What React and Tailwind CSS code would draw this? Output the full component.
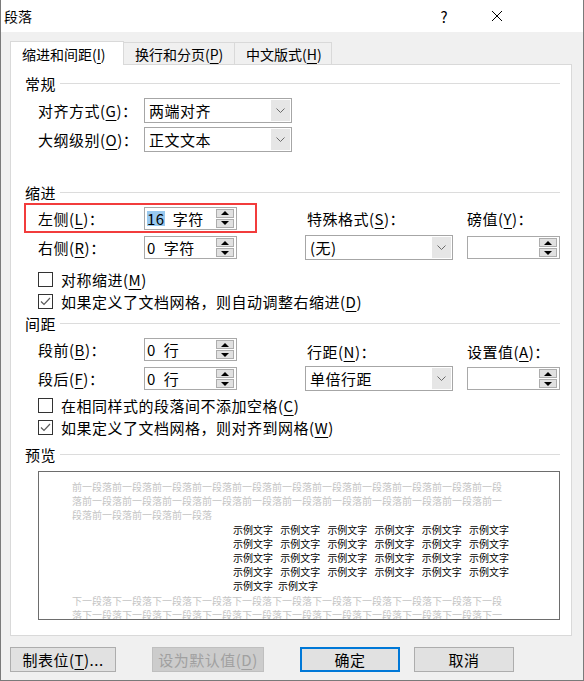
import React from 'react';

const U = ({ children }) => <span className="underline underline-offset-[3px] decoration-1">{children}</span>;

function Heading({ children, className = '' }) {
  return (
    <div className={`flex items-center h-[20px] pl-[14px] pr-[11px] ${className}`}>
      <span>{children}</span>
      <div className="flex-1 h-px bg-[#dcdcdc] ml-[4px]" />
    </div>
  );
}

function Chevron() {
  return (
    <svg width="9" height="5" viewBox="0 0 9 5">
      <polyline points="0.5,0.5 4.5,4.5 8.5,0.5" fill="none" stroke="#6b6b6b" strokeWidth="1" />
    </svg>
  );
}

function Select({ value }) {
  return (
    <div className="w-[148px] h-[25px] border border-[#a6a6a6] bg-white flex items-stretch">
      <span className="flex-1 flex items-center pl-[4px]">{value}</span>
      <span className="w-[19px] m-px bg-[#e6e6e6] flex items-center justify-center">
        <Chevron />
      </span>
    </div>
  );
}

function Tri({ down }) {
  return (
    <svg width="8" height="4" viewBox="0 0 8 4">
      {down ? <polygon points="0,0 8,0 4,4" fill="#000" /> : <polygon points="4,0 8,4 0,4" fill="#000" />}
    </svg>
  );
}

function Spin({ num, unit, selected }) {
  return (
    <div className="w-[93px] h-[23px] border border-[#a9a9a9] bg-white flex items-center">
      <span className="flex-1 pl-[2px] whitespace-nowrap flex items-center">
        {num && <span className={selected ? 'bg-[#99c9ef]' : ''}>{num}</span>}
        {unit && <span className="ml-[8px]">{unit}</span>}
      </span>
      <div className="flex flex-col gap-px mr-[2px]">
        <span className="w-[18px] h-[9px] bg-[#e1e1e1] border border-[#adadad] flex items-center justify-center"><Tri /></span>
        <span className="w-[18px] h-[9px] bg-[#e1e1e1] border border-[#adadad] flex items-center justify-center"><Tri down /></span>
      </div>
    </div>
  );
}

function Check({ checked, children, className = '' }) {
  return (
    <div className={`flex items-center h-[20px] pl-[27px] ${className}`}>
      <span className="w-[15px] h-[15px] border border-[#333] bg-white mr-[8px] flex items-center justify-center">
        {checked && (
          <svg width="11" height="9" viewBox="0 0 11 9">
            <polyline points="1,4.5 4,7.5 10,1" fill="none" stroke="#5a5a5a" strokeWidth="1.2" />
          </svg>
        )}
      </span>
      <span>{children}</span>
    </div>
  );
}

function Btn({ children, className = '', disabled }) {
  return (
    <div
      className={`h-[25px] flex items-center justify-center ${
        disabled ? 'bg-[#cccccc] border border-[#bfbfbf] text-[#a0a0a0]' : 'bg-[#e1e1e1] border border-[#adadad]'
      } ${className}`}
    >
      {children}
    </div>
  );
}

const prev = '前一段落'.repeat(25);
const next = '下一段落'.repeat(22);

export default function App() {
  return (
    <div
      className="w-[584px] h-[681px] bg-[#f0f0f0] border-x border-b border-[#7a7a7a] flex flex-col text-[15px] leading-none text-black tracking-[0.5px]"
      style={{ fontFamily: '"Noto Sans CJK SC", "Noto Sans", sans-serif' }}
    >
      {/* Title bar */}
      <div className="h-[32px] bg-white flex items-center shrink-0">
        <span className="pl-[3px] text-[14px] tracking-normal">段落</span>
        <span className="ml-auto mr-[43px] text-[15px]">?</span>
        <svg width="12" height="12" viewBox="0 0 12 12" className="mr-[80px]">
          <path d="M1 1 L11 11 M11 1 L1 11" stroke="#000" strokeWidth="1" />
        </svg>
      </div>

      <div className="px-[9px] pt-[9px]">
        {/* Tabs */}
        <div className="flex items-end h-[23px] text-[14px] tracking-normal">
          <div className="relative z-10 h-[24px] -mb-px w-[114px] bg-white border border-b-0 border-[#d9d9d9] flex items-center pl-[11px]">
            缩进和间距(<U>I</U>)
          </div>
          <div className="h-[22px] w-[112px] -ml-px border border-b-0 border-[#d9d9d9] flex items-center pl-[11px]">
            换行和分页(<U>P</U>)
          </div>
          <div className="h-[22px] w-[98px] -ml-px border border-b-0 border-[#d9d9d9] flex items-center pl-[11px]">
            中文版式(<U>H</U>)
          </div>
        </div>

        {/* Panel */}
        <div className="w-[562px] h-[572px] bg-white border border-[#d9d9d9] flex flex-col">
          <Heading className="mt-[8px]">常规</Heading>
          <div className="flex items-center h-[25px] mt-[5px] pl-[27px]">
            <span className="w-[106px]">对齐方式(<U>G</U>)：</span>
            <Select value="两端对齐" />
          </div>
          <div className="flex items-center h-[25px] mt-[4px] pl-[27px]">
            <span className="w-[106px]">大纲级别(<U>O</U>)：</span>
            <Select value="正文文本" />
          </div>

          <Heading className="mt-[30px]">缩进</Heading>
          <div className="flex items-center h-[30px] mt-px pl-[13px]">
            <div className="w-[233px] h-[30px] border-2 border-[#f23c3c] flex items-center pl-[12px]">
              <span className="w-[106px]">左侧(<U>L</U>)：</span>
              <Spin num="16" unit="字符" selected />
            </div>
            <span className="w-[162px] ml-[48px] pl-[2px]">特殊格式(<U>S</U>)：</span>
            <span>磅值(<U>Y</U>)：</span>
          </div>
          <div className="flex items-center h-[25px] mt-[2px] pl-[27px]">
            <span className="w-[106px]">右侧(<U>R</U>)：</span>
            <Spin num="0" unit="字符" />
            <div className="ml-[68px]">
              <Select value="(无)" />
            </div>
            <div className="ml-[14px]">
              <Spin />
            </div>
          </div>
          <Check className="mt-[9px]">对称缩进(<U>M</U>)</Check>
          <Check checked className="mt-[2px]">如果定义了文档网格，则自动调整右缩进(<U>D</U>)</Check>

          <Heading className="mt-[2px]">间距</Heading>
          <div className="flex items-center h-[23px] mt-[5px] pl-[27px]">
            <span className="w-[106px]">段前(<U>B</U>)：</span>
            <Spin num="0" unit="行" />
            <span className="w-[162px] ml-[68px] pl-[2px] mt-[4px]">行距(<U>N</U>)：</span>
            <span className="mt-[4px]">设置值(<U>A</U>)：</span>
          </div>
          <div className="flex items-center h-[25px] mt-[5px] pl-[27px]">
            <span className="w-[106px]">段后(<U>F</U>)：</span>
            <Spin num="0" unit="行" />
            <div className="ml-[68px]">
              <Select value="单倍行距" />
            </div>
            <div className="ml-[14px]">
              <Spin />
            </div>
          </div>
          <Check className="mt-[4px]">在相同样式的段落间不添加空格(<U>C</U>)</Check>
          <Check checked className="mt-[2px]">如果定义了文档网格，则对齐到网格(<U>W</U>)</Check>

          <Heading className="mt-[7px]">预览</Heading>
          <div className="ml-[27px] mt-[7px] w-[522px] h-[149px] border border-[#6d6d6d] bg-white overflow-hidden pt-[8px] pl-[33px] text-[10px] leading-[14.2px] tracking-normal">
            <div className="w-[432px] text-[#c4c4c4] break-all">{prev}</div>
            <div className="ml-[161px] w-[276px]">
              {[0, 1, 2, 3].map((r) => (
                <div key={r} className="flex justify-between">
                  {[0, 1, 2, 3, 4, 5].map((c) => (
                    <span key={c}>示例文字</span>
                  ))}
                </div>
              ))}
              <div className="flex gap-[5px]">
                <span>示例文字</span>
                <span>示例文字</span>
              </div>
            </div>
            <div className="w-[432px] text-[#c4c4c4] break-all">{next}</div>
          </div>
        </div>

        {/* Buttons */}
        <div className="flex items-center mt-[11px]">
          <Btn className="w-[106px]">制表位(<U>T</U>)...</Btn>
          <Btn disabled className="w-[112px] ml-[36px]">设为默认值(<U>D</U>)</Btn>
          <Btn className="w-[100px] ml-[36px] !border-2 !border-[#0078d7]">确定</Btn>
          <Btn className="w-[100px] ml-[14px]">取消</Btn>
        </div>
      </div>
    </div>
  );
}
